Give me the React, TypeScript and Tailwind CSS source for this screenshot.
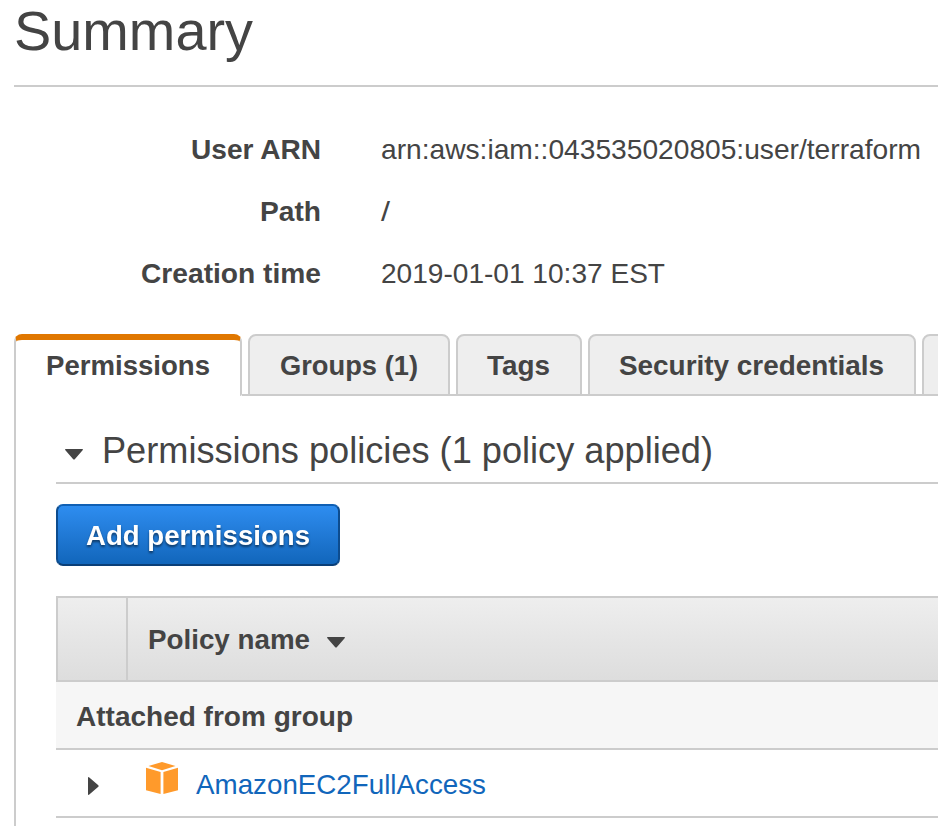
const T = ({ w, children, className = "" }: { w: number; children: string; className?: string }) => (
  <svg width={w} height="40" className={`block shrink-0 overflow-visible ${className}`}>
    <text x="0" y="29" textLength={w} lengthAdjust="spacingAndGlyphs" fill="currentColor">{children}</text>
  </svg>
);

const rows = [
  { label: "User ARN", lw: 130, value: "arn:aws:iam::043535020805:user/terraform", vw: 540 },
  { label: "Path", lw: 61, value: "/", vw: 9 },
  { label: "Creation time", lw: 180, value: "2019-01-01 10:37 EST", vw: 284 },
];

const tab = "h-[62px] shrink-0 rounded-t-[8px] border-2 border-[#ccc] bg-[#eee] pt-[10px]";

const Caret = ({ className }: { className: string }) => (
  <svg width="18" height="11" className={className}><path d="M0.4 0H17.6Q18.2 0.6 17.6 1.2L10 10Q9 11 8 10L0.4 1.2Q-0.2 0.6 0.4 0Z" fill="#444" /></svg>
);

const Gap = () => <div className="w-[6px] shrink-0 border-b-2 border-[#ccc]" />;

export default function App() {
  return (
    <div className="h-[826px] w-[938px] overflow-hidden bg-white pl-[14px] font-['Liberation_Sans',Arial,sans-serif] text-[28px] text-[#444]">
      <header className="h-[87px] border-b-2 border-[#ccc] pt-[21px] text-[56px]">
        <T w={239}>Summary</T>
      </header>
      <dl className="flex h-[247px] flex-col gap-[22px] pt-[43px]">
        {rows.map((r) => (
          <div key={r.label} className="flex h-[40px] gap-[60px]">
            <dt className="flex w-[307px] justify-end font-bold"><T w={r.lw}>{r.label}</T></dt>
            <dd><T w={r.vw}>{r.value}</T></dd>
          </div>
        ))}
      </dl>
      <nav className="flex h-[62px] font-bold">
        <div className="h-[62px] w-[228px] shrink-0 rounded-t-[8px] rounded-br-[2px] border-x-2 border-t-[6px] border-x-[#ccc] border-t-[#e07700] bg-white pl-[30px] pt-[6px]"><T w={164}>Permissions</T></div>
        <Gap />
        <div className={`${tab} w-[202px] pl-[30px]`}><T w={138}>Groups (1)</T></div>
        <Gap />
        <div className={`${tab} w-[126px] pl-[29px]`}><T w={63}>Tags</T></div>
        <Gap />
        <div className={`${tab} w-[328px] pl-[29px]`}><T w={265}>Security credentials</T></div>
        <Gap />
        <div className={`${tab} w-[100px]`} />
      </nav>
      <main className="h-[430px] border-l-2 border-[#ccc] pl-[40px]">
        <h2 className="flex h-[88px] items-start border-b-2 border-[#ccc] pl-[9px] pt-[38px] text-[36px]">
          <Caret className="mr-[19px] mt-[15px]" />
          <T w={611}>Permissions policies (1 policy applied)</T>
        </h2>
        <button className="mt-[20px] block h-[62px] w-[284px] rounded-[7px] border-2 border-t-[#1060b4] border-x-[#0d4c8e] border-b-[#0a3f78] bg-linear-to-b from-[#2e8df0] to-[#1166bb] pl-[28px] pt-[1px] text-left font-bold text-white"><T w={224} className="[filter:drop-shadow(0_2px_1px_rgba(0,0,0,0.5))]">Add permissions</T></button>
        <section className="mt-[30px]">
          <div className="flex h-[86px] border-2 border-r-0 border-[#ccc] bg-linear-to-b from-[#eee] to-[#ddd] font-bold">
            <div className="w-[70px] border-r-2 border-[#ccc]" />
            <div className="flex pl-[20px] pt-[22px]"><T w={162}>Policy name</T><Caret className="ml-[17px] mt-[17px]" /></div>
          </div>
          <div className="h-[68px] border-b-2 border-[#ccc] bg-[#f6f6f6] pl-[20px] pt-[15px] font-bold"><T w={277}>Attached from group</T></div>
          <div className="flex h-[68px] border-b-2 border-[#ccc] pl-[32px]">
            <svg width="11" height="18" className="mt-[27px]"><path d="M0 0.4Q0.5 -0.3 1 0.3L10.3 8.2Q11 9 10.3 9.8L1 17.7Q0.5 18.3 0 17.6Z" fill="#444" /></svg>
            <svg width="32" height="32" viewBox="0 0 32 32" className="ml-[47px] mt-[12px]" fill="#ff9a2b"><path d="M16 0L29.5 4L16 8.2L2.5 4ZM0 5.8L14.6 10V32L0 28.2ZM17.4 10L32 5.8V28.2L17.4 32Z" /></svg>
            <T w={290} className="ml-[18px] mt-[15px] text-[#1166bb]">AmazonEC2FullAccess</T>
          </div>
        </section>
      </main>
    </div>
  );
}
